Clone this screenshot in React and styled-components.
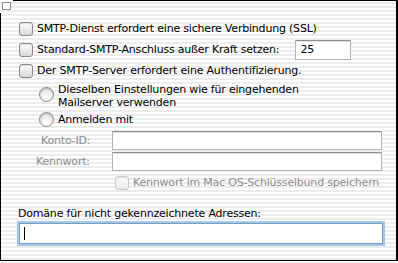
import React from "react";
import styled, { createGlobalStyle, css } from "styled-components";

const Global = createGlobalStyle`
  html, body { margin: 0; padding: 0; }
  body {
    width: 398px;
    height: 263px;
    overflow: hidden;
    font-family: "DejaVu Sans", "Liberation Sans", sans-serif;
    font-size: 11px;
    letter-spacing: -0.2px;
    color: #000;
  }
`;

const stripes = css`
  background: repeating-linear-gradient(
    to bottom,
    #ffffff 0px,
    #ffffff 2px,
    #ececec 2px,
    #ececec 4px
  );
`;

const Page = styled.div`
  position: relative;
  width: 398px;
  height: 263px;
  ${stripes}
`;

const Frame = styled.div`
  box-sizing: border-box;
  width: 398px;
  height: 261px;
  border: 1px solid #000;
  border-right-width: 2px;
  padding: 17px 0 0 18px;
  display: flex;
  flex-direction: column;
`;

const Corner = styled.div`
  position: absolute;
  left: 0;
  top: 0;
  width: 13px;
  height: 13px;
  ${stripes}
`;

const CornerBox = styled.div`
  position: absolute;
  left: 2px;
  top: 2px;
  width: 9px;
  height: 8px;
  box-sizing: border-box;
  border: 1px solid #8d8d8d;
  background: #fff;
`;

const Row = styled.div`
  display: flex;
  align-items: center;
  height: ${(p) => p.$h || 21}px;
  margin-left: ${(p) => p.$indent || 0}px;
`;

const Check = styled.span`
  box-sizing: border-box;
  width: 14px;
  height: 14px;
  flex: none;
  border-radius: 3px;
  border: 1px solid ${(p) => (p.$disabled ? "#c9c9c9" : "#8a8a8a")};
  background: ${(p) =>
    p.$disabled
      ? "linear-gradient(#fbfbfb, #ececec)"
      : "linear-gradient(#ffffff 0%, #eeeeee 45%, #d6d6d6 100%)"};
  box-shadow: inset 0 1px 1px rgba(0, 0, 0, 0.12);
  margin-right: 4px;
`;

const Radio = styled.span`
  box-sizing: border-box;
  width: 15px;
  height: 15px;
  flex: none;
  border-radius: 50%;
  border: 1px solid #8a8a8a;
  background: radial-gradient(circle at 50% 70%, #ffffff 0%, #eaeaea 55%, #c8c8c8 100%);
  box-shadow: inset 0 1px 1px rgba(0, 0, 0, 0.15);
  margin-right: 4px;
  align-self: ${(p) => (p.$top ? "flex-start" : "center")};
  margin-top: ${(p) => (p.$top ? "4px" : "0")};
`;

const Label = styled.span`
  color: ${(p) => (p.$disabled ? "#8c8c8c" : "#000")};
  white-space: nowrap;
  line-height: 13px;
`;

const TwoLine = styled.span`
  line-height: 13px;
  white-space: normal;
  width: 260px;
`;

const Field = styled.div`
  box-sizing: border-box;
  height: ${(p) => p.$h || 19}px;
  width: ${(p) => p.$w}px;
  background: #fff;
  border: 1px solid #b4b4b4;
  border-top-color: #8e8e8e;
  box-shadow: inset 0 1px 0 #e2e2e2;
  padding-left: 4px;
  display: flex;
  align-items: center;
  font-size: 11px;
`;

const FocusField = styled.div`
  box-sizing: border-box;
  height: 21px;
  width: 364px;
  background: #fff;
  border: 1px solid #7a9cc4;
  box-shadow: 0 0 0 2px #a8c6e6;
  margin-left: 0;
  display: flex;
  align-items: center;
  padding-left: 4px;
`;

const Caret = styled.span`
  width: 1px;
  height: 13px;
  background: #000;
`;

const FormRow = styled.div`
  display: grid;
  grid-template-columns: 93px 270px;
  align-items: center;
  height: 21px;
`;

const FieldLabel = styled.span`
  color: #8c8c8c;
  padding-left: ${(p) => p.$pl || 0}px;
`;

const Spacer = styled.div`
  height: ${(p) => p.$h}px;
`;

const PortGap = styled.span`
  width: 16px;
`;

export default function App() {
  return (
    <Page>
      <Global />
      <Frame>
        <Row>
          <Check />
          <Label>SMTP-Dienst erfordert eine sichere Verbindung (SSL)</Label>
        </Row>
        <Row>
          <Check />
          <Label>Standard-SMTP-Anschluss außer Kraft setzen:</Label>
          <PortGap />
          <Field $w={56} $h={20}>25</Field>
        </Row>
        <Row>
          <Check />
          <Label>Der SMTP-Server erfordert eine Authentifizierung.</Label>
        </Row>
        <Spacer $h={2} />
        <Row $indent={20} $h={26}>
          <Radio $top />
          <TwoLine>Dieselben Einstellungen wie für eingehenden Mailserver verwenden</TwoLine>
        </Row>
        <Row $indent={20}>
          <Radio />
          <Label>Anmelden mit</Label>
        </Row>
        <FormRow>
          <FieldLabel $pl={22}>Konto-ID:</FieldLabel>
          <Field $w={270} />
        </FormRow>
        <FormRow>
          <FieldLabel $pl={17}>Kennwort:</FieldLabel>
          <Field $w={270} />
        </FormRow>
        <Row $indent={96}>
          <Check $disabled />
          <Label $disabled>Kennwort im Mac OS-Schlüsselbund speichern</Label>
        </Row>
        <Spacer $h={13} />
        <Row $indent={-1} $h={15}>
          <Label>Domäne für nicht gekennzeichnete Adressen:</Label>
        </Row>
        <Spacer $h={2} />
        <FocusField>
          <Caret />
        </FocusField>
      </Frame>
      <Corner>
        <CornerBox />
      </Corner>
    </Page>
  );
}
